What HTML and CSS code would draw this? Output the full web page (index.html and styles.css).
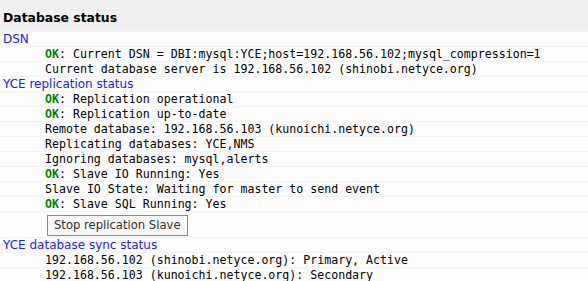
FILE: index.html
```html
<!DOCTYPE html>
<html lang="en">
<head>
    <meta charset="UTF-8">
    <title>Database status</title>
    <link rel="stylesheet" href="styles.css">
</head>
<body>
    <div class="title">Database status</div>
    <table class="status-table">
        <tr><td class="section" colspan="2">DSN</td></tr>
        <tr><td class="indent"></td><td class="info"><span class="ok">OK</span>: Current DSN = DBI:mysql:YCE;host=192.168.56.102;mysql_compression=1</td></tr>
        <tr><td class="indent"></td><td class="info">Current database server is 192.168.56.102 (shinobi.netyce.org)</td></tr>
        <tr><td class="section" colspan="2">YCE replication status</td></tr>
        <tr><td class="indent"></td><td class="info"><span class="ok">OK</span>: Replication operational</td></tr>
        <tr><td class="indent"></td><td class="info"><span class="ok">OK</span>: Replication up-to-date</td></tr>
        <tr><td class="indent"></td><td class="info">Remote database: 192.168.56.103 (kunoichi.netyce.org)</td></tr>
        <tr><td class="indent"></td><td class="info">Replicating databases: YCE,NMS</td></tr>
        <tr><td class="indent"></td><td class="info">Ignoring databases: mysql,alerts</td></tr>
        <tr><td class="indent"></td><td class="info"><span class="ok">OK</span>: Slave IO Running: Yes</td></tr>
        <tr><td class="indent"></td><td class="info">Slave IO State: Waiting for master to send event</td></tr>
        <tr><td class="indent"></td><td class="info"><span class="ok">OK</span>: Slave SQL Running: Yes</td></tr>
        <tr><td class="indent"></td><td class="action"><button class="btn">Stop replication Slave</button></td></tr>
        <tr><td class="section" colspan="2">YCE database sync status</td></tr>
        <tr><td class="indent"></td><td class="info">192.168.56.102 (shinobi.netyce.org): Primary, Active</td></tr>
        <tr><td class="indent"></td><td class="info">192.168.56.103 (kunoichi.netyce.org): Secondary</td></tr>
    </table>
</body>
</html>
```

FILE: styles.css
```css
* { box-sizing: border-box; }
body { margin: 0; background: #f4f4f4; font-family: 'DejaVu Sans', sans-serif; color: #000; }
.title { background: #efefef; height: 31px; line-height: 35px; padding-left: 3px; font-size: 12.4px; font-weight: bold; }
.status-table { width: 100%; border-collapse: separate; border-spacing: 0 1px; }
.status-table td { background: #fdfdfd; padding: 0; height: 14px; line-height: 14px; white-space: nowrap; }
.section { color: #2020f0; font-size: 12px; padding-left: 3px !important; }
.indent { width: 45px; }
.info { font-family: 'DejaVu Sans Mono', monospace; font-size: 11.6px; }
.ok { color: #008000; font-weight: bold; }
.action { height: 25px !important; }
.btn { font-family: 'DejaVu Sans', sans-serif; font-size: 11.6px; color: #333; background: #f8f8f8; border: 1px solid #888; padding: 2px 6px; height: 21px; margin-left: 2px; margin-top: 1px; }
```
